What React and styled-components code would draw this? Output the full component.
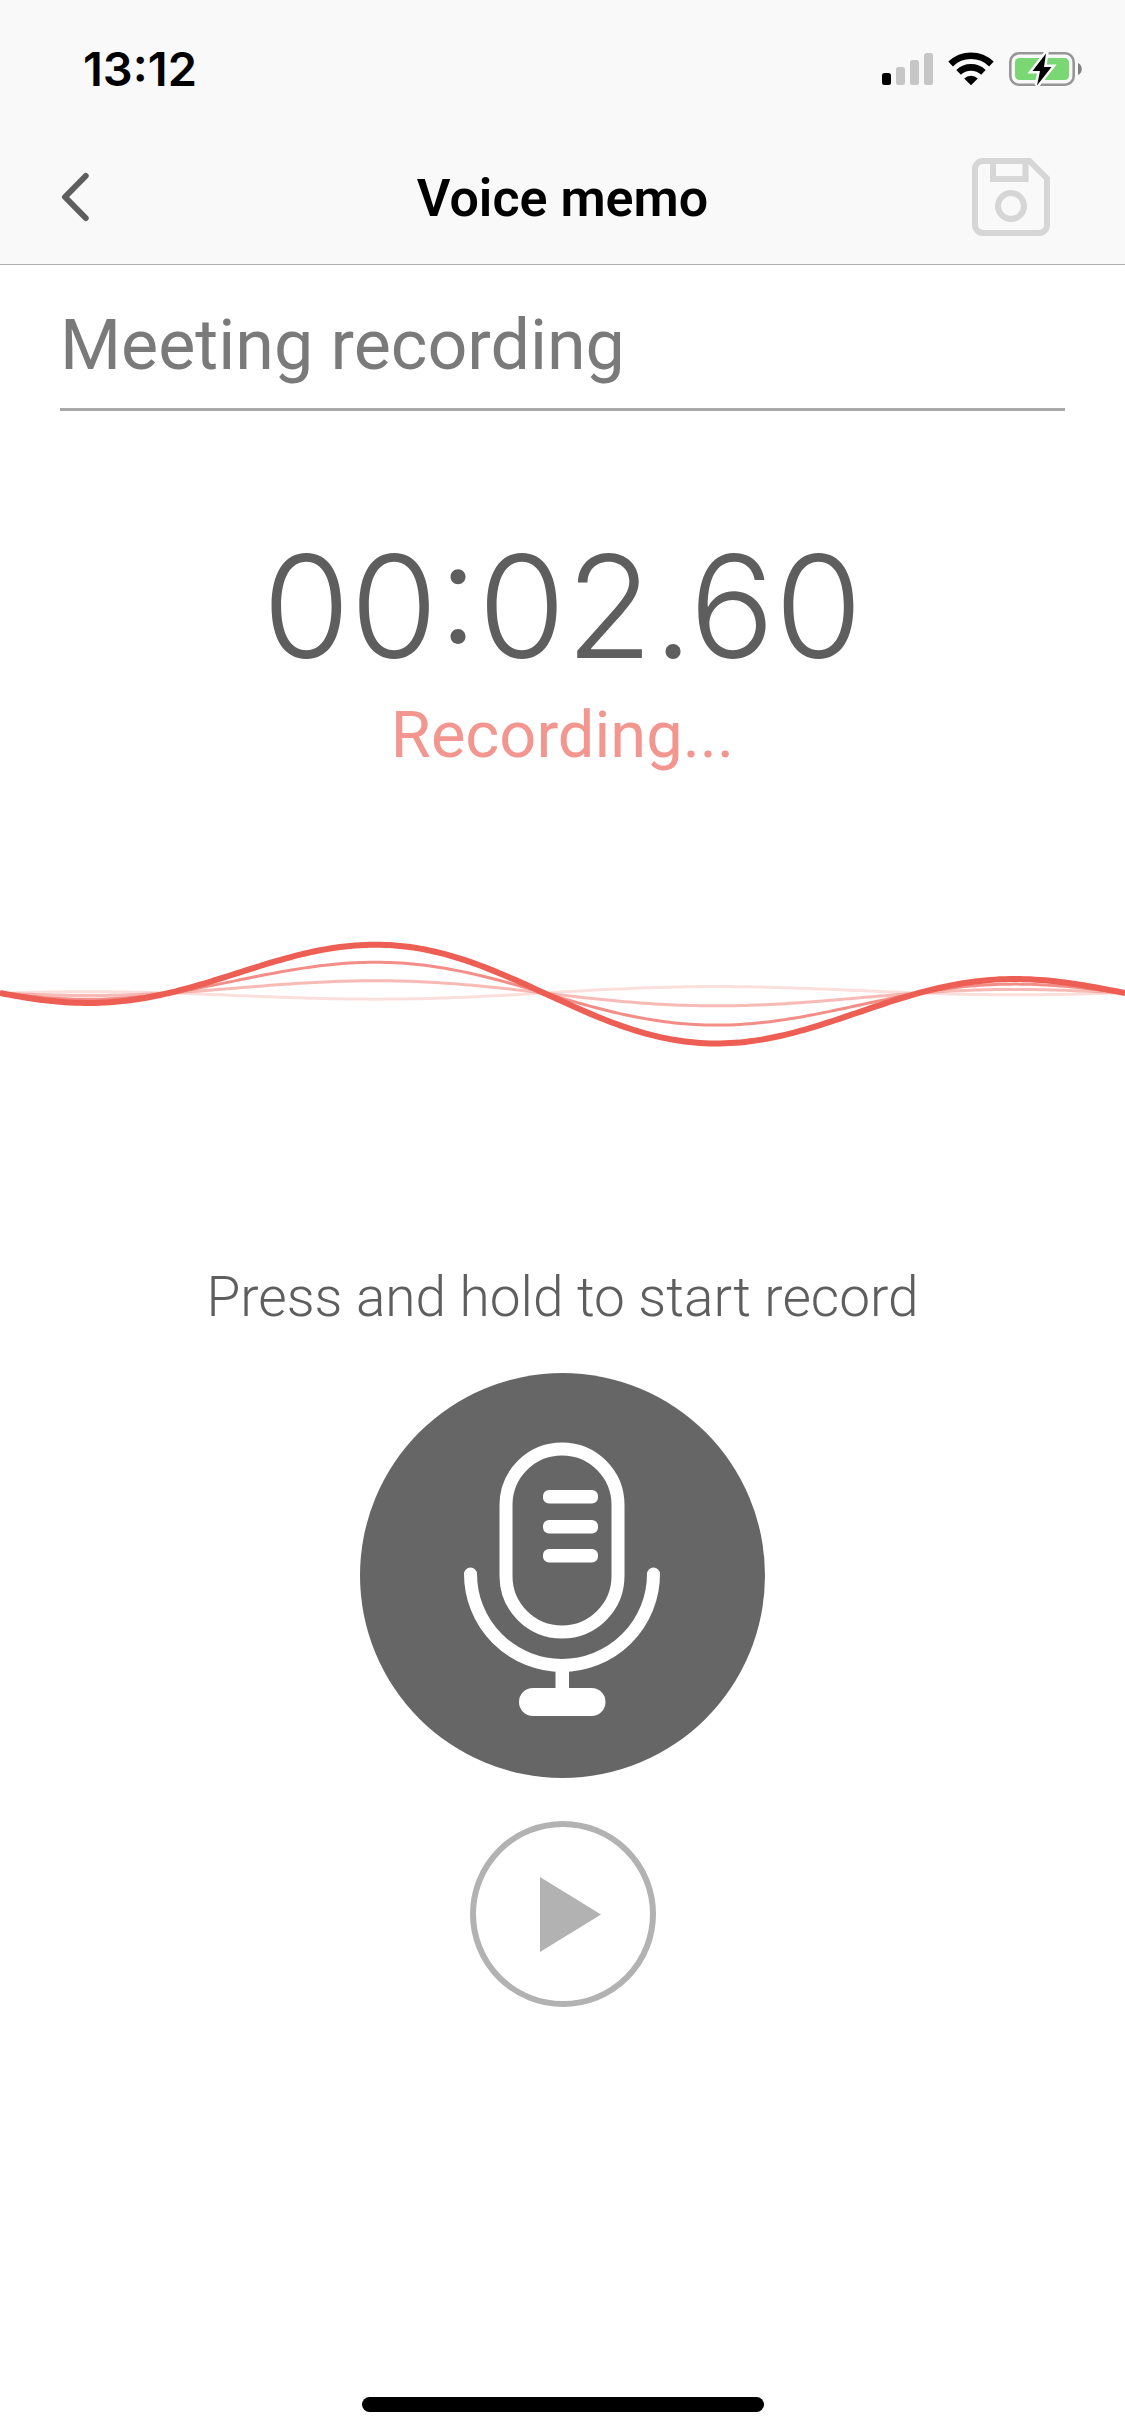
import React from "react";
import styled, { createGlobalStyle } from "styled-components";

const GlobalStyle = createGlobalStyle`
  *, *::before, *::after { box-sizing: border-box; }
  body {
    margin: 0;
    background: #ffffff;
    font-family: Roboto, "Liberation Sans", sans-serif;
  }
  button { padding: 0; border: 0; background: none; font: inherit; cursor: pointer; }
  svg { display: block; }
`;

const Screen = styled.div`
  display: flex;
  flex-direction: column;
  min-height: 100vh;
`;

const Header = styled.header`
  background: #f9f9f9;
  border-bottom: 1px solid #adadad;
`;

const StatusBar = styled.div`
  display: flex;
  align-items: center;
  justify-content: space-between;
  height: 132px;
  padding: 6px 42px 0 83px;
`;

const Clock = styled.time`
  font-family: Inter, "Liberation Sans", sans-serif;
  font-size: 47px;
  font-weight: 600;
  line-height: 54px;
  color: #000000;
`;

const StatusIcons = styled.div`
  display: flex;
  align-items: center;
  gap: 15px;
`;

const NavBar = styled.nav`
  display: grid;
  grid-template-columns: 111px 1fr 90px;
  align-items: center;
  height: 132px;
  padding: 0 75px 2px 54px;
`;

const IconButton = styled.button`
  display: flex;
  justify-content: ${(p) => (p.$end ? "flex-end" : "flex-start")};
  align-items: center;
  height: 90px;
`;

const Title = styled.h1`
  margin: 0;
  padding-top: 4px;
  font-size: 52px;
  font-weight: 600;
  line-height: 60px;
  text-align: center;
  color: #000000;
`;

const Main = styled.main`
  display: flex;
  flex: 1;
  flex-direction: column;
  align-items: center;
`;

const NameField = styled.label`
  display: block;
  width: 100%;
  padding: 32px 60px 0;
`;

const NameInput = styled.input`
  display: block;
  width: 100%;
  height: 114px;
  padding: 0 0 15px;
  border: 0;
  border-bottom: 3px solid #a9a9a9;
  border-radius: 0;
  outline: none;
  background: transparent;
  font-family: inherit;
  font-size: 70px;
  line-height: 84px;
  color: #7a7a7a;
`;

const Timer = styled.div`
  margin-top: 108px;
  font-family: Inter, "Liberation Sans", sans-serif;
  font-size: 142px;
  font-weight: 300;
  line-height: 174px;
  color: #5e5e5e;
`;

const Status = styled.p`
  margin: 0;
  padding-top: 3px;
  font-size: 65px;
  line-height: 78px;
  color: #f2968f;
`;

const WaveBox = styled.div`
  width: 100%;
  margin-top: 159px;
`;

const Hint = styled.p`
  margin: 0;
  padding-top: 211px;
  font-size: 55px;
  font-weight: 300;
  line-height: 66px;
  color: #5e5e5e;
`;

const RecordButton = styled.button`
  display: grid;
  place-items: center;
  width: 405px;
  height: 405px;
  margin-top: 43px;
  border-radius: 50%;
  background: #666666;
`;

const PlayButton = styled.button`
  display: grid;
  place-items: center;
  width: 186px;
  height: 186px;
  margin-top: 43px;
  border: 6px solid #b2b2b2;
  border-radius: 50%;
`;

const HomeArea = styled.footer`
  display: flex;
  justify-content: center;
  padding: 24px;
`;

const HomeIndicator = styled.div`
  width: 402px;
  height: 15px;
  border-radius: 8px;
  background: #000000;
`;

const SignalIcon = () => (
  <svg width="51" height="34" viewBox="0 0 51 34" aria-hidden="true">
    <rect x="0" y="21" width="9" height="12" rx="2.5" fill="#000" />
    <rect x="14" y="15" width="9" height="18" rx="2.5" fill="#c6c6c6" />
    <rect x="28" y="8" width="9" height="25" rx="2.5" fill="#c6c6c6" />
    <rect x="42" y="1" width="9" height="32" rx="2.5" fill="#c6c6c6" />
  </svg>
);

const WifiIcon = () => (
  <svg width="46" height="34" viewBox="0 0 46 34" aria-hidden="true">
    <g fill="none" stroke="#000" strokeWidth="6.6">
      <path d="M2.6 12 A29.4 29.4 0 0 1 43.4 12" />
      <path d="M10.6 20.3 A18 18 0 0 1 35.4 20.3" />
    </g>
    <path d="M23 33.2 L16.2 26.4 A9.8 9.8 0 0 1 29.8 26.4 Z" fill="#000" />
  </svg>
);

const BatteryIcon = () => (
  <svg width="74" height="34" viewBox="0 0 74 34" aria-hidden="true">
    <rect x="1.3" y="1.3" width="63.4" height="31.4" rx="8.6" fill="none" stroke="#969696" strokeWidth="2.6" />
    <path d="M69 11 C74 13 74 21 69 23 Z" fill="#808080" />
    <rect x="6" y="6" width="54" height="22" rx="4.5" fill="#79d873" />
    <path
      d="M37 1.5 L23.5 19 H31 L28 33.5 L42.5 15 H35 Z"
      fill="#000"
      stroke="#f9f9f9"
      strokeWidth="5"
      paintOrder="stroke"
    />
  </svg>
);

const BackIcon = () => (
  <svg width="40" height="54" viewBox="0 0 40 54" fill="none" stroke="#5e5e5e" strokeWidth="6" strokeLinecap="round" strokeLinejoin="round" aria-hidden="true">
    <path d="M31.7 6 L11 27 L31.7 48" />
  </svg>
);

const SaveIcon = () => (
  <svg width="78" height="78" viewBox="0 0 78 78" fill="none" stroke="#d6d6d6" strokeWidth="6" aria-hidden="true">
    <path d="M11 3 H57.5 L75 20.5 V67 A8 8 0 0 1 67 75 H11 A8 8 0 0 1 3 67 V11 A8 8 0 0 1 11 3 Z" />
    <path d="M21 3 V21 H53.5 V3" />
    <circle cx="39" cy="48" r="13" />
  </svg>
);

const MicIcon = () => (
  <svg width="405" height="405" viewBox="0 0 405 405" fill="none" stroke="#fff" strokeWidth="13" strokeLinecap="round" aria-hidden="true">
    <rect x="146" y="76" width="112" height="183" rx="56" />
    <path d="M110.5 201 A91.3 91.3 0 0 0 293.5 201" />
    <g fill="#fff" stroke="none">
      <rect x="183" y="117" width="55" height="13.5" rx="6" />
      <rect x="183" y="147" width="55" height="13.5" rx="6" />
      <rect x="183" y="176" width="55" height="13.5" rx="6" />
      <rect x="195.5" y="292" width="13.5" height="30" />
      <rect x="159" y="315" width="86.5" height="28" rx="14" />
    </g>
  </svg>
);

const PlayIcon = () => (
  <svg width="174" height="174" viewBox="0 0 174 174" aria-hidden="true">
    <path d="M64 50 L125 87.5 L64 125 Z" fill="#b2b2b2" />
  </svg>
);

const WAVES = [
  { amplitude: 55, opacity: 1, width: 6 },
  { amplitude: 35, opacity: 0.7, width: 3 },
  { amplitude: 14, opacity: 0.43, width: 3 },
  { amplitude: -7, opacity: 0.2, width: 3 },
];

const WAVE_WIDTH = 1125;
const WAVE_MIDDLE = 60;

// A sine of one and a half periods that fades out towards both edges.
const wavePath = (amplitude) => {
  const half = WAVE_WIDTH / 2;
  const points = [];
  for (let x = 0; x <= WAVE_WIDTH; x += 5) {
    const envelope = 1 - ((x - half) / half) ** 2;
    const y = WAVE_MIDDLE - amplitude * envelope * Math.sin((2 * Math.PI * (x - 169)) / 750);
    points.push(`${x} ${y.toFixed(2)}`);
  }
  return `M${points.join(" L")}`;
};

const Waveform = () => (
  <WaveBox>
    <svg width="100%" viewBox={`0 0 ${WAVE_WIDTH} 120`} fill="none" role="img" aria-label="Sound level">
      {WAVES.map((w) => (
        <path
          key={w.amplitude}
          d={wavePath(w.amplitude)}
          stroke={w.opacity === 1 ? "#ed5e54" : `rgba(237, 94, 84, ${w.opacity})`}
          strokeWidth={w.width}
        />
      ))}
    </svg>
  </WaveBox>
);

export default function App() {
  return (
    <>
      <GlobalStyle />
      <Screen>
        <Header>
          <StatusBar>
            <Clock>13:12</Clock>
            <StatusIcons>
              <SignalIcon />
              <WifiIcon />
              <BatteryIcon />
            </StatusIcons>
          </StatusBar>
          <NavBar>
            <IconButton type="button" aria-label="Back">
              <BackIcon />
            </IconButton>
            <Title>Voice memo</Title>
            <IconButton type="button" aria-label="Save" $end>
              <SaveIcon />
            </IconButton>
          </NavBar>
        </Header>
        <Main>
          <NameField>
            <NameInput type="text" aria-label="Recording name" defaultValue="Meeting recording" />
          </NameField>
          <Timer role="timer">00:02.60</Timer>
          <Status>Recording...</Status>
          <Waveform />
          <Hint>Press and hold to start record</Hint>
          <RecordButton type="button" aria-label="Record">
            <MicIcon />
          </RecordButton>
          <PlayButton type="button" aria-label="Play">
            <PlayIcon />
          </PlayButton>
        </Main>
        <HomeArea>
          <HomeIndicator />
        </HomeArea>
      </Screen>
    </>
  );
}
